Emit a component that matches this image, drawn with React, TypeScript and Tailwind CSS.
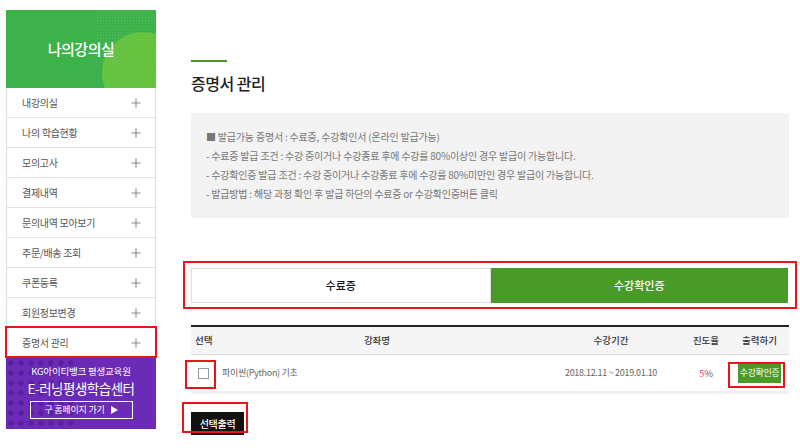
import React from 'react'

const menuItems = [
  '내강의실',
  '나의 학습현황',
  '모의고사',
  '결제내역',
  '문의내역 모아보기',
  '주문/배송 조회',
  '쿠폰등록',
  '회원정보변경',
  '증명서 관리',
]

const notices = [
  '■ 발급가능 증명서 : 수료증, 수강확인서 (온라인 발급가능)',
  '- 수료증 발급 조건 : 수강 중이거나 수강종료 후에 수강률 80%이상인 경우 발급이 가능합니다.',
  '- 수강확인증 발급 조건 : 수강 중이거나 수강종료 후에 수강률 80%미만인 경우 발급이 가능합니다.',
  '- 발급방법 : 해당 과정 확인 후 발급 하단의 수료증 or 수강확인증버튼 클릭',
]

function PlusIcon() {
  return (
    <svg width="10" height="10" viewBox="0 0 10 10" className="text-[#888]">
      <path d="M5 0.5v9M0.5 5h9" stroke="currentColor" strokeWidth="1.1" />
    </svg>
  )
}

function Sidebar() {
  return (
    <aside className="w-[150px] mt-[10px] ml-[6px] flex-shrink-0">
      {/* Header */}
      <div className="relative h-[78px] bg-[#3db14a] overflow-hidden flex items-center justify-center">
        <div className="absolute left-[90px] top-0 w-[60px] h-[55px] bg-[radial-gradient(rgba(255,255,255,0.14)_0.8px,transparent_1px)] bg-[size:3px_3px]" />
        <div className="absolute left-[96px] top-[22px] w-[82px] h-[82px] rounded-full bg-[#66c33f]" />
        <div className="absolute left-[96px] top-[22px] w-[82px] h-[82px] rounded-full bg-[radial-gradient(rgba(255,255,255,0.07)_0.8px,transparent_1px)] bg-[size:3px_3px]" />
        <span className="relative text-white text-[15px] font-medium tracking-[-0.5px]">나의강의실</span>
      </div>

      {/* Menu */}
      <ul className="border-x border-[#ddd]">
        {menuItems.map((item, i) => (
          <li
            key={item}
            className="relative h-[30px] flex items-center justify-between pl-[15px] pr-[14px] border-b border-[#e3e3e3] bg-white"
          >
            <span className="text-[10px] text-[#555] tracking-[-0.3px]">{item}</span>
            <PlusIcon />
            {i === menuItems.length - 1 && (
              <div className="absolute -left-[2px] -right-[2px] -top-[2px] -bottom-[1px] border-2 border-[#e8141b]" />
            )}
          </li>
        ))}
      </ul>

      {/* Banner */}
      <div className="relative h-[71px] bg-[#6b2bb6] overflow-hidden flex flex-col items-center pt-[6px]">
        <div className="absolute left-0 top-0 w-[70px] h-[71px] bg-[radial-gradient(circle,rgba(60,10,120,0.35)_2.6px,transparent_3px)] bg-[size:10px_10px]" />
        <span className="relative text-white text-[9.5px] leading-[14px] tracking-[-0.2px]">KG아이티뱅크 평생교육원</span>
        <span className="relative text-white text-[13.5px] leading-[20px] tracking-[-0.5px]">E-러닝평생학습센터</span>
        <div className="relative mt-[3px] w-[103px] h-[18px] border border-white flex items-center justify-center gap-[6px]">
          <span className="text-white text-[9px] leading-[12px] tracking-[-0.2px]">구 홈페이지 가기</span>
          <svg width="7" height="8" viewBox="0 0 7 8">
            <path d="M0 0L7 4L0 8Z" fill="#fff" />
          </svg>
        </div>
      </div>
    </aside>
  )
}

function RedBox({ className }: { className: string }) {
  return <div className={`absolute border-2 border-[#e8141b] pointer-events-none ${className}`} />
}

export default function App() {
  return (
    <div
      className="w-[800px] h-[448px] bg-white flex overflow-hidden"
      style={{ fontFamily: '"Noto Sans CJK KR", "Noto Sans", sans-serif' }}
    >
      <Sidebar />

      <main className="ml-[35px] w-[598px] flex flex-col">
        <div className="mt-[60px] w-[36px] h-[2px] bg-[#4a9a2a]" />
        <h1 className="mt-[11px] text-[16px] leading-[20px] font-medium text-[#222] tracking-[-0.5px]">증명서 관리</h1>

        {/* Notice box */}
        <div className="mt-[20px] h-[105px] bg-[#f3f3f3] pl-[15px] pt-[14px]">
          {notices.map((n) => (
            <p key={n} className="text-[10px] leading-[19px] text-[#777] tracking-[-0.2px]">
              {n}
            </p>
          ))}
        </div>

        {/* Tabs */}
        <div className="relative mt-[43px] -ml-[8px] -mr-[8px] border-2 border-[#e8141b] pt-[5px] pb-[4px] pl-[6px] pr-[7px]">
          <div className="flex h-[35px]">
            <button className="flex-1 border border-[#ddd] bg-white text-[11px] font-medium text-[#111]">수료증</button>
            <button className="flex-1 bg-[#4a9a2a] text-[11px] font-medium text-white">수강확인증</button>
          </div>
        </div>

        {/* Table */}
        <div className="mt-[16px] border-t-2 border-[#222]">
          <div className="flex h-[28px] items-center bg-[#f5f5f5] border-b border-[#ddd] text-[9.5px] font-medium text-[#333]">
            <div className="w-[27px] pl-[4px]">선택</div>
            <div className="w-[318px] text-center">강좌명</div>
            <div className="w-[150px] text-center">수강기간</div>
            <div className="w-[40px] text-center">진도율</div>
            <div className="w-[63px] pl-[4px] text-center">출력하기</div>
          </div>
          <div className="flex h-[39px] items-center border-b-[3px] border-[#f0f0f0] text-[9px] text-[#666]">
            <div className="w-[27px] pl-[7px]">
              <div className="relative w-[11px] h-[11px]">
                <div className="w-[11px] h-[11px] border border-[#999] bg-white" />
                <RedBox className="-left-[13px] -right-[7px] -top-[8px] -bottom-[10px]" />
              </div>
            </div>
            <div className="w-[318px] pl-[4px] tracking-[-0.3px]">파이썬(Python) 기초</div>
            <div className="w-[150px] text-center tracking-[-0.3px]">2018.12.11 ~ 2019.01.10</div>
            <div className="w-[40px] text-center text-[9.5px]">
              <span className="text-[#ec4f7f]">5</span>%
            </div>
            <div className="w-[63px] pl-[4px] flex justify-center">
              <div className="relative">
                <div className="w-[43px] h-[19px] bg-[#4a9a2a] text-white text-[9px] flex items-center justify-center tracking-[-0.4px]">
                  수강확인증
                </div>
                <RedBox className="-left-[10px] -right-[4px] -top-[2px] -bottom-[5px]" />
              </div>
            </div>
          </div>
        </div>

        <div className="mt-[15px] relative w-[53px] h-[23px]">
          <button className="w-[53px] h-[23px] bg-[#111] text-white text-[10px] font-medium tracking-[-0.3px]">선택출력</button>
          <RedBox className="-left-[9px] -right-[4px] -top-[7px] -bottom-[1px]" />
        </div>
      </main>
    </div>
  )
}
